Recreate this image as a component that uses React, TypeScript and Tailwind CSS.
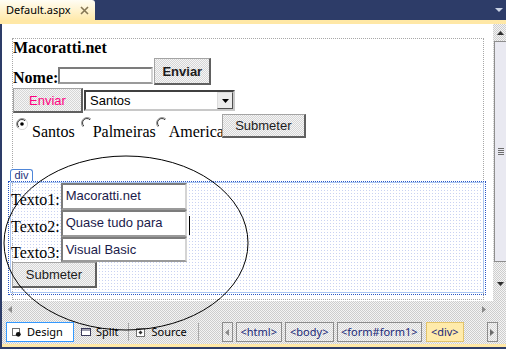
import React from "react";

const dither =
  "bg-[image:repeating-conic-gradient(#cdcdcd_0%_25%,#f4f4f4_0%_50%)] bg-[length:2px_2px]";
const btnDither =
  "bg-[image:repeating-conic-gradient(#d6d6d6_0%_25%,#f6f6f6_0%_50%)] bg-[length:2px_2px]";

function FormButton({
  children,
  className = "",
}: {
  children: React.ReactNode;
  className?: string;
}) {
  return (
    <div
      className={`flex shrink-0 items-center justify-center border border-[#a4a4a4] border-r-2 border-b-2 border-r-[#606060] border-b-[#606060] ${btnDither} font-['Liberation_Sans',Arial,sans-serif] text-[13px] leading-[15px] text-[#1c1c1c] ${className}`}
    >
      {children}
    </div>
  );
}

function TextBox({ value = "", className = "" }: { value?: string; className?: string }) {
  return (
    <div
      className={`shrink-0 border-2 border-t-[#7c7c7c] border-l-[#7c7c7c] border-b-[#9a9a9a] border-r-[#d4d4d4] bg-white pl-[3px] pt-[3px] font-['Liberation_Sans',Arial,sans-serif] text-[13px] leading-[15px] text-[#1b1b4b] ${className}`}
    >
      {value}
    </div>
  );
}

function Radio({ checked = false }: { checked?: boolean }) {
  return (
    <svg width="12" height="12" viewBox="0 0 12 12" className="shrink-0">
      <path d="M10 2.2 A5.4 5.4 0 0 0 2.2 10" stroke="#8a8a8a" strokeWidth="1" fill="none" />
      <path d="M9 2.8 A4.3 4.3 0 0 0 2.8 9" stroke="#3a3a3a" strokeWidth="1" fill="none" />
      {checked && (
        <>
          <path d="M2.2 10 A5.4 5.4 0 0 0 10 2.2" stroke="#d8d8d8" strokeWidth="1" fill="none" />
          <circle cx="6" cy="6" r="1.8" fill="#000" />
        </>
      )}
    </svg>
  );
}

function Crumb({ label, active = false }: { label: string; active?: boolean }) {
  return (
    <div
      className={`flex h-[20px] shrink-0 items-center justify-center border text-[#202878] ${
        active ? "border-[#e3c46a] bg-[#ffebab]" : `border-[#8c8c8c] ${btnDither}`
      }`}
    >
      {label}
    </div>
  );
}

export default function App() {
  return (
    <div className="relative h-[349px] w-[506px] overflow-hidden bg-[#2d3c68] font-['Noto_Sans',sans-serif]">
      {/* document tab strip */}
      <div className="flex h-[20px] items-stretch">
        <div className="flex w-[95px] items-center rounded-tr-[3px] bg-linear-to-b from-[#fffdf4] to-[#ffe9aa] pl-[6px] text-[11px] text-black">
          <span>Default.aspx</span>
          <svg width="9" height="9" viewBox="0 0 9 9" className="ml-auto mr-[6px]">
            <path d="M1 1 L8 8 M8 1 L1 8" stroke="#857655" strokeWidth="1.6" />
          </svg>
        </div>
        <div className="flex flex-1 items-center justify-end pr-[3px]">
          <svg width="8" height="5" viewBox="0 0 8 5">
            <path d="M0 0 H8 L4 4 Z" fill="#c9d2e4" />
          </svg>
        </div>
      </div>
      <div className="h-[4px] bg-[#ffe8a6]" />

      {/* design surface */}
      <div className="ml-[2px] flex h-[277px]">
        <div className="flex-1 overflow-hidden bg-white">
          <div className="ml-[10px] mt-[14px] h-[262px] w-[472px] border border-dotted border-[#a8a8a8] font-['Liberation_Serif','Times_New_Roman',serif] text-[16px] text-black">
            <div className="h-[18px] font-bold leading-[18px]">Macoratti.net</div>

            <div className="flex h-[31px] items-start">
              <span className="mt-[12px] font-bold leading-[18px]">Nome:</span>
              <TextBox className="mt-[10px] h-[17px] w-[95px]" />
              <FormButton className="ml-[1px] mt-[1px] h-[27px] w-[57px] font-bold">Enviar</FormButton>
            </div>

            <div className="flex h-[26px] items-start">
              <FormButton className="h-[25px] w-[70px] text-[#ff0080]">Enviar</FormButton>
              <div className="ml-[1px] mt-[2px] flex h-[21px] w-[151px] items-stretch border-2 border-t-[#404040] border-l-[#404040] border-b-[#c8c8c8] border-r-[#c8c8c8] bg-white font-['Liberation_Sans',Arial,sans-serif] text-[13px] leading-[15px] text-black">
                <span className="flex-1 self-center pl-[4px]">Santos</span>
                <div className="flex w-[16px] items-center justify-center border border-[#dcdcdc] border-r-[#505050] border-b-[#505050] bg-[#ececec]">
                  <svg width="7" height="4" viewBox="0 0 7 4">
                    <path d="M0 0 H7 L3.5 4 Z" fill="#000" />
                  </svg>
                </div>
              </div>
            </div>

            <div className="flex h-[26px] items-start">
              <div className="ml-[3px] mt-[4px]">
                <Radio checked />
              </div>
              <span className="ml-[4px] mt-[9px] leading-[18px]">Santos</span>
              <div className="ml-[6px] mt-[3px]">
                <Radio />
              </div>
              <span className="mt-[9px] leading-[18px]">Palmeiras</span>
              <div className="mt-[3px]">
                <Radio />
              </div>
              <span className="ml-[1px] mt-[9px] leading-[18px]">America</span>
              <FormButton className="-ml-[2px] h-[24px] w-[84px]">Submeter</FormButton>
            </div>

            {/* div block */}
            <div className="-ml-[5px] mt-[29px]">
              <div className="ml-[2px] flex h-[12px] w-[23px] items-center justify-center rounded-t-[3px] border border-b-0 border-[#4f86d8] bg-white font-['Liberation_Sans',Arial,sans-serif] text-[11px] leading-[11px] text-[#1d2f7a]">
                div
              </div>
              <div className="h-[114px] w-[478px] border border-dotted border-[#2a56c4] pl-[1px]">
                <div className="h-[111px] w-[474px] border border-[#aac6f2] bg-[image:radial-gradient(#c9d2f2_0.7px,transparent_0.8px)] bg-[length:3px_3px]">
                  <div className="flex h-[27px] items-start">
                    <span className="mt-[8px] leading-[18px]">Texto1:</span>
                    <TextBox value="Macoratti.net" className="ml-[1px] h-[27px] w-[126px]" />
                  </div>
                  <div className="flex h-[27px] items-start">
                    <span className="mt-[8px] leading-[18px]">Texto2:</span>
                    <TextBox value="Quase tudo para" className="ml-[1px] h-[27px] w-[126px]" />
                    <span className="ml-[2px] mt-[6px] h-[19px] w-px bg-black" />
                  </div>
                  <div className="flex h-[25px] items-start">
                    <span className="mt-[7px] leading-[18px]">Texto3:</span>
                    <TextBox value="Visual Basic" className="ml-[1px] h-[25px] w-[126px]" />
                  </div>
                  <FormButton className="ml-[1px] h-[26px] w-[85px]">Submeter</FormButton>
                </div>
              </div>
            </div>
          </div>
        </div>

        {/* vertical scrollbar */}
        <div className={`flex w-[13px] flex-col ${dither}`}>
          <div className="flex h-[17px] items-end justify-center pb-[6px] pl-[2px]">
            <svg width="7" height="4" viewBox="0 0 7 4">
              <path d="M0 4 H7 L3.5 0 Z" fill="#2b2b2b" />
            </svg>
          </div>
          <div className="ml-[1px] flex h-[221px] items-center justify-center border border-r-0 border-[#8e8e8e] bg-[#e9e9f1]">
            <div className="flex flex-col gap-[1px]">
              <span className="h-px w-[6px] bg-[#6c6c6c]" />
              <span className="h-px w-[6px] bg-[#6c6c6c]" />
              <span className="h-px w-[6px] bg-[#6c6c6c]" />
              <span className="h-px w-[6px] bg-[#6c6c6c]" />
            </div>
          </div>
          <div className="flex h-[26px] items-end justify-center pb-[2px] pl-[2px]">
            <svg width="7" height="4" viewBox="0 0 7 4">
              <path d="M0 0 H7 L3.5 4 Z" fill="#2b2b2b" />
            </svg>
          </div>
        </div>
      </div>

      {/* horizontal scrollbar */}
      <div className={`ml-[2px] flex h-[16px] items-center justify-between pl-[6px] pr-[20px] ${dither}`}>
        <svg width="4" height="7" viewBox="0 0 4 7">
          <path d="M4 0 V7 L0 3.5 Z" fill="#8a8a8a" />
        </svg>
        <svg width="4" height="7" viewBox="0 0 4 7">
          <path d="M0 0 V7 L4 3.5 Z" fill="#8a8a8a" />
        </svg>
      </div>

      {/* view switcher + tag navigator */}
      <div className={`ml-[2px] flex h-[27px] items-start pl-[4px] pt-[5px] text-[11px] leading-[14px] text-black ${dither}`}>
        <div className="flex h-[20px] w-[68px] shrink-0 items-center border border-[#3399ff] bg-white pl-[5px]">
          <svg width="9" height="9" viewBox="0 0 9 9">
            <rect x="0.5" y="0.5" width="7" height="7" fill="#fff" stroke="#6f6f6f" />
            <circle cx="6.3" cy="6.3" r="2.4" fill="#111" />
          </svg>
          <span className="ml-[6px]">Design</span>
        </div>
        <div className="ml-[7px] flex h-[20px] items-center">
          <svg width="10" height="8" viewBox="0 0 10 8">
            <rect x="0.5" y="0.5" width="9" height="7" fill="#fff" stroke="#3a3a5a" />
            <path d="M1 2 H9" stroke="#3a3a5a" />
          </svg>
          <span className="ml-[5px]">Split</span>
        </div>
        <span className="ml-[10px] mt-[1px] h-[18px] w-px bg-[#a8a8a8]" />
        <div className="ml-[7px] flex h-[20px] items-center">
          <svg width="9" height="9" viewBox="0 0 9 9">
            <rect x="0.5" y="0.5" width="8" height="8" fill="#fff" stroke="#6f6f6f" />
            <path d="M4.5 2.5 L6.5 4.5 L4.5 6.5 L2.5 4.5 Z" fill="#333" />
          </svg>
          <span className="ml-[6px]">Source</span>
        </div>
        <span className="ml-[11px] mt-[1px] h-[18px] w-px bg-[#a8a8a8]" />
        <div className={`ml-[23px] flex h-[20px] w-[11px] shrink-0 items-center justify-center border border-[#8c8c8c] ${btnDither}`}>
          <svg width="4" height="7" viewBox="0 0 4 7">
            <path d="M4 0 V7 L0 3.5 Z" fill="#8a8a8a" />
          </svg>
        </div>
        <div className="ml-[3px] w-[46px]">
          <Crumb label="<html>" />
        </div>
        <div className="ml-[3px] w-[49px]">
          <Crumb label="<body>" />
        </div>
        <div className="ml-[3px] w-[85px]">
          <Crumb label="<form#form1>" />
        </div>
        <div className="ml-[4px] w-[38px]">
          <Crumb label="<div>" active />
        </div>
        <div className={`ml-[23px] flex h-[20px] w-[11px] shrink-0 items-center justify-center border border-[#8c8c8c] ${btnDither}`}>
          <svg width="4" height="7" viewBox="0 0 4 7">
            <path d="M0 0 V7 L4 3.5 Z" fill="#6a6a6a" />
          </svg>
        </div>
      </div>
      <div className="ml-[2px] h-[3px] bg-[#ffe8a6]" />

      {/* hand-drawn annotation */}
      <svg
        className="pointer-events-none absolute left-0 top-0"
        width="506"
        height="349"
        viewBox="0 0 506 349"
      >
        <ellipse cx="126" cy="243" rx="122" ry="87" fill="none" stroke="#000" strokeWidth="1" />
      </svg>
    </div>
  );
}
